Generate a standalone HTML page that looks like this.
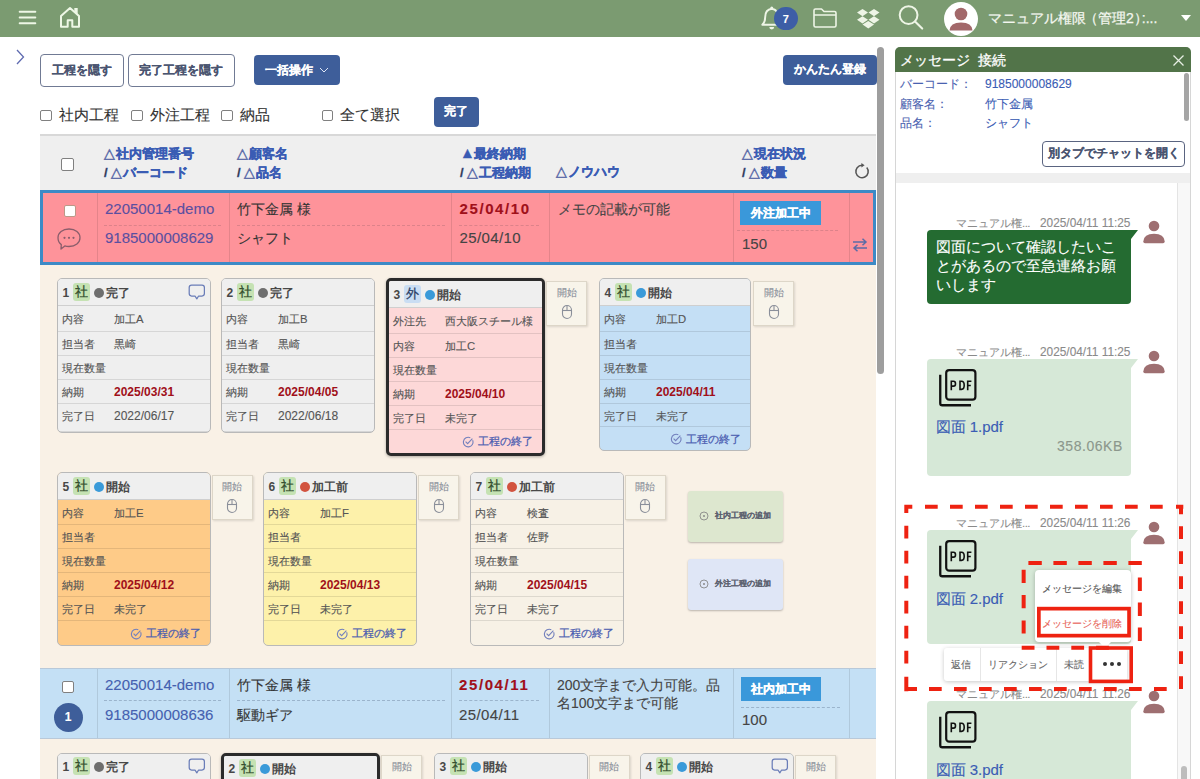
<!DOCTYPE html><html><head><meta charset="utf-8"><style>
*{box-sizing:border-box;margin:0;padding:0}
html,body{width:1200px;height:779px;overflow:hidden;background:#fff;font-family:"Liberation Sans",sans-serif;color:#333;-webkit-text-stroke-width:0.12px}
.a{position:absolute}
.t{position:absolute;white-space:nowrap}
.btnw{position:absolute;border:1.3px solid #707a94;border-radius:4px;background:#fff;color:#4a5470;font-size:12px;font-weight:bold;display:flex;align-items:center;justify-content:center}
.btnb{position:absolute;border-radius:4px;background:#3e5e9a;color:#fff;font-size:12px;font-weight:bold;display:flex;align-items:center;justify-content:center}
.cb{position:absolute;width:12px;height:12px;border:1px solid #808080;border-radius:2px;background:#fff}
.hd{position:absolute;font-size:13px;font-weight:bold;color:#3a5cb4;line-height:18px;white-space:nowrap;-webkit-text-stroke:0.35px #3a5cb4}
.hd b{color:#333}
.hd i{font-style:normal;font-weight:normal;-webkit-text-stroke:0.5px #5a6aa8;color:#5a6aa8;font-size:14px;margin-right:1px}
.card{position:absolute;border:1px solid #b9b9b9;border-radius:5px;overflow:hidden;font-size:12px;color:#555;background:#efefef}
.card.th{border:3px solid #2b2b2b;box-shadow:0 1px 3px rgba(0,0,0,.3)}
.ch{position:absolute;left:0;right:0;top:0;background:#efefef;border-bottom:1px solid #cfcfcf}
.cr{position:absolute;left:0;right:0;border-bottom:1px solid rgba(0,0,0,.1)}
.cr span{position:absolute;line-height:16px;white-space:nowrap;font-size:11.3px}
.red{color:#a0101a;font-weight:bold;-webkit-text-stroke-width:0}
.bdg{position:absolute;border-radius:3px;font-weight:bold;font-size:13px;text-align:center}
.dot{position:absolute;width:10px;height:10px;border-radius:50%}
.st{position:absolute;font-weight:bold;font-size:13px;color:#484848;white-space:nowrap;-webkit-text-stroke-width:0}
.kai{position:absolute;background:#f8f4ea;border:1px solid #ddd6c8;box-shadow:1px 1px 2px rgba(0,0,0,.12);font-size:9px;color:#8a8f9a;text-align:center}
.end{position:absolute;right:9px;color:#4a5cb0;font-size:11px;white-space:nowrap;-webkit-text-stroke-width:0.25px}
</style></head><body>
<div class="a" style="left:0;top:0;width:1200px;height:37px;background:#7b9b71"></div>
<svg class="a" style="left:17px;top:9px" width="22" height="18" viewBox="0 0 22 18"><g stroke="#eef7e6" stroke-width="2" stroke-linecap="round"><line x1="2.7" y1="2.7" x2="18.3" y2="2.7"/><line x1="2.7" y1="8.5" x2="18.3" y2="8.5"/><line x1="2.7" y1="14.3" x2="18.3" y2="14.3"/></g></svg>
<svg class="a" style="left:58px;top:5px" width="24" height="24" viewBox="0 0 24 24"><path d="M3 11 L12 3 L21 11 V21.7 H14.3 V15.3 H9.7 V21.7 H3 Z" fill="none" stroke="#eef7e6" stroke-width="2" stroke-linejoin="round"/><path d="M16.3 3 H19.7 V9.3 L16.3 6.2 Z" fill="#eef7e6"/></svg>
<svg class="a" style="left:758px;top:5px" width="24" height="28" viewBox="0 0 24 28"><path d="M4.3 19.8 Q7.2 17 7.2 12 Q7.2 4.8 13.75 3.8 Q20.3 4.8 20.3 12 Q20.3 17 23.2 19.8 Z" fill="none" stroke="#eef5e6" stroke-width="1.9" stroke-linejoin="round"/><circle cx="13.75" cy="3" r="1.5" fill="#eef5e6"/><path d="M11.3 22 A2.45 2.45 0 0 0 16.2 22 Z" fill="#eef5e6"/></svg>
<div class="a" style="left:774px;top:6.5px;width:23.5px;height:23.5px;border-radius:50%;background:#3d5ea6;color:#fff;font-size:11px;font-weight:bold;text-align:center;line-height:24px">7</div>
<svg class="a" style="left:811px;top:6px" width="28" height="24" viewBox="0 0 28 24"><path d="M3 4.5 Q3 3 4.5 3 H10.5 L13 5.5 H23.5 Q25 5.5 25 7 V19.5 Q25 21 23.5 21 H4.5 Q3 21 3 19.5 Z M3 9 H25" fill="none" stroke="#eef5e6" stroke-width="1.6" stroke-linejoin="round"/></svg>
<svg class="a" style="left:856px;top:7.6px" width="25" height="22" viewBox="0 0 25 22"><g fill="#eef5e6"><path d="M6.5 1 L1 4.6 L6.5 8.2 L12 4.6 Z"/><path d="M18 1 L12.5 4.6 L18 8.2 L23.5 4.6 Z"/><path d="M1 11.8 L6.5 15.4 L12 11.8 L6.5 8.2 Z"/><path d="M12.5 11.8 L18 15.4 L23.5 11.8 L18 8.2 Z"/><path d="M6.5 16.6 L12.25 20.6 L18 16.6 L12.25 13 Z"/></g></svg>
<svg class="a" style="left:896px;top:4px" width="30" height="28" viewBox="0 0 30 28"><circle cx="12.6" cy="11.1" r="8.9" fill="none" stroke="#eef5e6" stroke-width="2"/><line x1="19" y1="17.6" x2="26.2" y2="24.6" stroke="#eef5e6" stroke-width="2.1" stroke-linecap="round"/></svg>
<svg class="a" style="left:944px;top:2px" width="34" height="34" viewBox="0 0 34 34"><circle cx="17" cy="17" r="17" fill="#fff"/><circle cx="17" cy="12" r="6.3" fill="#a2686a"/><path d="M5.5 28.5 Q6 20.5 17 20.5 Q28 20.5 28.5 28.5 Z" fill="#a2686a"/></svg>
<div class="t" style="left:988px;top:10px;font-size:14px;color:#f4f7f0;line-height:17px;-webkit-text-stroke:0.25px #f4f7f0">マニュアル権限<span style="margin-left:-2px">（</span>管理2<span style="letter-spacing:-6px">）</span>:...</div>
<svg class="a" style="left:1180px;top:14px" width="12" height="8" viewBox="0 0 12 8"><path d="M1 1 H11 L6 7 Z" fill="#fff"/></svg>
<svg class="a" style="left:14px;top:48px" width="12" height="18" viewBox="0 0 12 18"><path d="M3 2 L9.5 9 L3 16" fill="none" stroke="#5f6bb0" stroke-width="1.3"/></svg>
<div class="btnw" style="left:39.5px;top:54px;width:84px;height:33px">工程を隠す</div>
<div class="btnw" style="left:127.5px;top:54px;width:107px;height:33px">完了工程を隠す</div>
<div class="btnb" style="left:254px;top:55px;width:86px;height:30px">一括操作 <svg style="margin-left:6px" width="10" height="6" viewBox="0 0 10 6"><path d="M1 1 L5 5 L9 1" fill="none" stroke="#dfe6f5" stroke-width="1"/></svg></div>
<div class="btnb" style="left:782.5px;top:54.5px;width:94px;height:30px">かんたん登録</div>
<div class="cb" style="left:40px;top:109.5px;width:11.5px;height:11.5px"></div>
<div class="t" style="left:58.5px;top:105.5px;font-size:15px;line-height:18px;color:#333">社内工程</div>
<div class="cb" style="left:131px;top:109.5px;width:11.5px;height:11.5px"></div>
<div class="t" style="left:149.5px;top:105.5px;font-size:15px;line-height:18px;color:#333">外注工程</div>
<div class="cb" style="left:221px;top:109.5px;width:11.5px;height:11.5px"></div>
<div class="t" style="left:239.5px;top:105.5px;font-size:15px;line-height:18px;color:#333">納品</div>
<div class="cb" style="left:321.5px;top:109.5px;width:11.5px;height:11.5px"></div>
<div class="t" style="left:340.0px;top:105.5px;font-size:15px;line-height:18px;color:#333">全て選択</div>
<div class="btnb" style="left:433.5px;top:96.5px;width:45px;height:30px">完了</div>
<div class="a" style="left:877px;top:46.5px;width:7px;height:327px;border-radius:4px;background:#9e9e9e"></div>
<div class="a" style="left:40px;top:134px;width:836px;height:56px;background:#efefef;border-top:2px solid #d8d8d8"></div>
<div class="cb" style="left:61px;top:158px;width:13px;height:13px"></div>
<div class="hd" style="left:104px;top:144.3px"><i>△</i>社内管理番号<br><b>/</b> <i>△</i>バーコード</div>
<div class="hd" style="left:237px;top:144.3px"><i>△</i>顧客名<br><b>/</b> <i>△</i>品名</div>
<div class="hd" style="left:460px;top:144.3px"><span style="font-size:15px;margin-right:-1px">▲</span>最終納期<br><b>/</b> <i>△</i>工程納期</div>
<div class="hd" style="left:556px;top:162.3px"><i>△</i>ノウハウ</div>
<div class="hd" style="left:742px;top:144.3px"><i>△</i>現在状況<br><b>/</b> <i>△</i>数量</div>
<svg class="a" style="left:853px;top:162px" width="18" height="18" viewBox="0 0 18 18"><path d="M13.75 5.5 A6.2 6.2 0 1 1 9 3.3" fill="none" stroke="#555" stroke-width="1.5"/><path d="M11.6 3.3 L8.4 1 V5.6 Z" fill="#555"/></svg>
<div class="a" style="left:40px;top:265px;width:836px;height:514px;background:#f9f1e6"></div>
<div class="a" style="left:40px;top:190px;width:836px;height:75px;background:#fe939a;border:3px solid #3d8ac6"></div><div class="a" style="left:96.5px;top:193px;width:1px;height:69px;background:rgba(0,0,0,.10)"></div><div class="a" style="left:228.7px;top:193px;width:1px;height:69px;background:rgba(0,0,0,.10)"></div><div class="a" style="left:451.2px;top:193px;width:1px;height:69px;background:rgba(0,0,0,.10)"></div><div class="a" style="left:549.2px;top:193px;width:1px;height:69px;background:rgba(0,0,0,.10)"></div><div class="a" style="left:732.6px;top:193px;width:1px;height:69px;background:rgba(0,0,0,.10)"></div><div class="a" style="left:848.8px;top:193px;width:1px;height:69px;background:rgba(0,0,0,.10)"></div>
<div class="cb" style="left:63.5px;top:204.5px;width:12px;height:12px;border-color:#b98;"></div>
<svg class="a" style="left:56px;top:227px" width="26" height="24" viewBox="0 0 26 24"><path d="M13 2 C19.5 2 24 5.8 24 10.8 C24 15.8 19.5 19.5 13 19.5 C11.5 19.5 10 19.3 8.8 18.9 L5 22 L5.3 17.6 C3 16 2 13.5 2 10.8 C2 5.8 6.5 2 13 2 Z" fill="none" stroke="#8b5d6b" stroke-width="1.3" stroke-linejoin="round"/><circle cx="8.5" cy="10.8" r="1.1" fill="#8b5d6b"/><circle cx="13" cy="10.8" r="1.1" fill="#8b5d6b"/><circle cx="17.5" cy="10.8" r="1.1" fill="#8b5d6b"/></svg>
<div class="t" style="left:105px;top:200px;font-size:15px;line-height:18px;color:#5b4fa0">22050014-demo</div>
<div class="t" style="left:105px;top:229px;font-size:15px;line-height:18px;color:#5b4fa0">9185000008629</div>
<div class="t" style="left:237px;top:200px;font-size:14px;line-height:18px;color:#333">竹下金属 様</div>
<div class="t" style="left:237px;top:229px;font-size:14px;line-height:18px;color:#333">シャフト</div>
<div class="t" style="left:459.5px;top:200px;font-size:15px;line-height:18px;color:#a0101a;font-weight:bold;letter-spacing:1.6px">25/04/10</div>
<div class="t" style="left:459.5px;top:229px;font-size:15px;line-height:18px;color:#444;letter-spacing:0.4px">25/04/10</div>
<div class="t" style="left:558px;top:200px;font-size:14px;line-height:18px;color:#444">メモの記載が可能</div>
<div class="a" style="left:740px;top:200.5px;width:81px;height:24.5px;background:#3a98da;color:#fff;font-weight:bold;font-size:12px;text-align:center;line-height:24px;-webkit-text-stroke:0.3px #fff">外注加工中</div>
<div class="t" style="left:742px;top:235px;font-size:15px;line-height:18px;color:#444">150</div>
<div class="a" style="left:104px;top:224.5px;width:117px;height:0;border-top:1px dashed rgba(120,80,90,.25)"></div>
<div class="a" style="left:237px;top:224.5px;width:208px;height:0;border-top:1px dashed rgba(120,80,90,.25)"></div>
<div class="a" style="left:459px;top:224.5px;width:80px;height:0;border-top:1px dashed rgba(120,80,90,.25)"></div>
<div class="a" style="left:737px;top:229.5px;width:101px;height:0;border-top:1px dashed rgba(120,80,90,.25)"></div>
<svg class="a" style="left:851px;top:237px" width="18" height="16" viewBox="0 0 18 16"><g fill="none" stroke="#5c6ca6" stroke-width="1.5"><path d="M2 5 H15 M11.5 1.8 L15 5 L11.5 8.2"/><path d="M16 11 H3 M6.5 7.8 L3 11 L6.5 14.2"/></g></svg>
<div class="a" style="left:40px;top:667.5px;width:836px;height:71.5px;background:#c4e0f5;border-top:1px solid #b9c9d9;border-bottom:1px solid #b9c9d9"></div><div class="a" style="left:96.5px;top:668.5px;width:1px;height:69.5px;background:rgba(0,0,0,.10)"></div><div class="a" style="left:228.7px;top:668.5px;width:1px;height:69.5px;background:rgba(0,0,0,.10)"></div><div class="a" style="left:451.2px;top:668.5px;width:1px;height:69.5px;background:rgba(0,0,0,.10)"></div><div class="a" style="left:549.2px;top:668.5px;width:1px;height:69.5px;background:rgba(0,0,0,.10)"></div><div class="a" style="left:732.6px;top:668.5px;width:1px;height:69.5px;background:rgba(0,0,0,.10)"></div><div class="a" style="left:848.8px;top:668.5px;width:1px;height:69.5px;background:rgba(0,0,0,.10)"></div>
<div class="cb" style="left:62px;top:681px;width:12px;height:12px"></div>
<div class="a" style="left:53.5px;top:702.5px;width:29px;height:29px;border-radius:50%;background:#3e5e9a;color:#fff;font-size:12px;font-weight:bold;text-align:center;line-height:29px">1</div>
<div class="t" style="left:105px;top:676px;font-size:15px;line-height:18px;color:#4560b0">22050014-demo</div>
<div class="t" style="left:105px;top:705.5px;font-size:15px;line-height:18px;color:#4560b0">9185000008636</div>
<div class="t" style="left:237px;top:676px;font-size:14px;line-height:18px;color:#333">竹下金属 様</div>
<div class="t" style="left:237px;top:705.5px;font-size:14px;line-height:18px;color:#333">駆動ギア</div>
<div class="t" style="left:459px;top:676px;font-size:15px;line-height:18px;color:#a0101a;font-weight:bold;letter-spacing:1.6px">25/04/11</div>
<div class="t" style="left:459px;top:705.5px;font-size:15px;line-height:18px;color:#444;letter-spacing:0.4px">25/04/11</div>
<div class="a" style="left:557px;top:676px;width:175px;font-size:14px;line-height:18px;color:#444">200文字まで入力可能。品名100文字まで可能</div>
<div class="a" style="left:741px;top:676.5px;width:80px;height:24.5px;background:#3a98da;color:#fff;font-weight:bold;font-size:12px;text-align:center;line-height:24px;-webkit-text-stroke:0.3px #fff">社内加工中</div>
<div class="t" style="left:742px;top:711px;font-size:15px;line-height:18px;color:#444">100</div>
<div class="a" style="left:104px;top:699.5px;width:117px;height:0;border-top:1px dashed rgba(60,80,110,.3)"></div>
<div class="a" style="left:237px;top:699.5px;width:208px;height:0;border-top:1px dashed rgba(60,80,110,.3)"></div>
<div class="a" style="left:459px;top:699.5px;width:80px;height:0;border-top:1px dashed rgba(60,80,110,.3)"></div>
<div class="a" style="left:741px;top:706.5px;width:99px;height:0;border-top:1px dashed rgba(60,80,110,.3)"></div>
<div class="card" style="left:57px;top:278px;width:154px;height:155px;background:#efefef"><div class="ch" style="height:27px"><div class="st" style="left:4.5px;top:5.5px;font-size:12px;line-height:16px">1</div><div class="bdg" style="left:14.5px;top:3.5px;width:17.5px;height:18px;line-height:18px;background:#c5e2b3;color:#2f4a2a;font-weight:normal;-webkit-text-stroke:0.3px #2f4a2a">社</div><div class="dot" style="left:35.5px;top:8.5px;background:#6e6e6e"></div><div class="st" style="left:48px;top:4.5px;line-height:18px;font-size:12px">完了</div><svg class="a" style="left:129.5px;top:4.5px" width="18" height="17" viewBox="0 0 18 17"><path d="M3.6 1.2 H14 Q16.4 1.2 16.4 3.6 V9.6 Q16.4 12 14 12 H10.6 L8.8 14.8 L7 12 H3.6 Q1.2 12 1.2 9.6 V3.6 Q1.2 1.2 3.6 1.2 Z" fill="none" stroke="#6a7db8" stroke-width="1.25" stroke-linejoin="round"/></svg></div><div class="cr" style="top:27px;height:26px"><span style="left:4px;top:5px">内容</span><span style="left:56px;top:5px;font-size:11.3px">加工A</span></div><div class="cr" style="top:53px;height:24px"><span style="left:4px;top:4px">担当者</span><span style="left:56px;top:4px;font-size:11.3px">黒崎</span></div><div class="cr" style="top:77px;height:24px"><span style="left:4px;top:4px">現在数量</span><span style="left:56px;top:4px;font-size:11.3px"></span></div><div class="cr" style="top:101px;height:24px"><span style="left:4px;top:4px">納期</span><span class="red" style="left:56px;top:4px;font-size:12px">2025/03/31</span></div><div class="cr" style="top:125px;height:28px"><span style="left:4px;top:4px">完了日</span><span style="left:56px;top:4px;font-size:12px">2022/06/17</span></div></div>
<div class="card" style="left:221px;top:278px;width:154px;height:155px;background:#efefef"><div class="ch" style="height:27px"><div class="st" style="left:4.5px;top:5.5px;font-size:12px;line-height:16px">2</div><div class="bdg" style="left:14.5px;top:3.5px;width:17.5px;height:18px;line-height:18px;background:#c5e2b3;color:#2f4a2a;font-weight:normal;-webkit-text-stroke:0.3px #2f4a2a">社</div><div class="dot" style="left:35.5px;top:8.5px;background:#6e6e6e"></div><div class="st" style="left:48px;top:4.5px;line-height:18px;font-size:12px">完了</div></div><div class="cr" style="top:27px;height:26px"><span style="left:4px;top:5px">内容</span><span style="left:56px;top:5px;font-size:11.3px">加工B</span></div><div class="cr" style="top:53px;height:24px"><span style="left:4px;top:4px">担当者</span><span style="left:56px;top:4px;font-size:11.3px">黒崎</span></div><div class="cr" style="top:77px;height:24px"><span style="left:4px;top:4px">現在数量</span><span style="left:56px;top:4px;font-size:11.3px"></span></div><div class="cr" style="top:101px;height:24px"><span style="left:4px;top:4px">納期</span><span class="red" style="left:56px;top:4px;font-size:12px">2025/04/05</span></div><div class="cr" style="top:125px;height:28px"><span style="left:4px;top:4px">完了日</span><span style="left:56px;top:4px;font-size:12px">2022/06/18</span></div></div>
<div class="card th" style="left:386px;top:278px;width:159px;height:178.0px;background:#fdd8d8"><div class="ch" style="height:27px"><div class="st" style="left:4.5px;top:5.5px;font-size:12px;line-height:16px">3</div><div class="bdg" style="left:14.5px;top:3.5px;width:17.5px;height:18px;line-height:18px;background:#c9ddf3;color:#2a3f66;font-weight:normal;-webkit-text-stroke:0.3px #2a3f66">外</div><div class="dot" style="left:35.5px;top:8.5px;background:#3a9ad9"></div><div class="st" style="left:48px;top:4.5px;line-height:18px;font-size:12px">開始</div></div><div class="cr" style="top:27px;height:25.5px"><span style="left:4px;top:5px">外注先</span><span style="left:56px;top:5px;font-size:11.3px">西大阪スチール様</span></div><div class="cr" style="top:52.5px;height:24.5px"><span style="left:4px;top:4px">内容</span><span style="left:56px;top:4px;font-size:11.3px">加工C</span></div><div class="cr" style="top:77.0px;height:24px"><span style="left:4px;top:4px">現在数量</span><span style="left:56px;top:4px;font-size:11.3px"></span></div><div class="cr" style="top:101.0px;height:24px"><span style="left:4px;top:4px">納期</span><span class="red" style="left:56px;top:4px;font-size:12px">2025/04/10</span></div><div class="cr" style="top:125.0px;height:23.5px"><span style="left:4px;top:4px">完了日</span><span style="left:56px;top:4px;font-size:11.3px">未完了</span></div><div class="a" style="left:0;right:0;top:148.5px;height:23.5px"><svg class="a" style="left:73px;top:6.25px" width="12" height="12" viewBox="0 0 12 12"><path d="M10.6 4.2 A4.8 4.8 0 1 1 8.3 1.8" fill="none" stroke="#7380bd" stroke-width="1.1"/><path d="M3.6 5.6 L5.6 7.6 L10.4 2.6" fill="none" stroke="#7380bd" stroke-width="1.1"/></svg><span class="end" style="top:3.75px;line-height:16px">工程の終了</span></div></div>
<div class="kai" style="left:546px;top:281px;width:41px;height:44.5px"><div style="margin-top:5px;line-height:11px;font-size:10px">開始</div></div><svg class="a" style="left:560.5px;top:304px" width="12" height="16" viewBox="0 0 12 16"><rect x="1.5" y="1.5" width="9" height="13" rx="4.5" fill="none" stroke="#8a8f9a" stroke-width="1.1"/><line x1="6" y1="2" x2="6" y2="6.5" stroke="#8a8f9a" stroke-width="1.1"/><line x1="1.8" y1="6.5" x2="10.2" y2="6.5" stroke="#8a8f9a" stroke-width="1.1"/></svg>
<div class="card" style="left:599px;top:278px;width:152px;height:173.0px;background:#c4dff5"><div class="ch" style="height:27px"><div class="st" style="left:4.5px;top:5.5px;font-size:12px;line-height:16px">4</div><div class="bdg" style="left:14.5px;top:3.5px;width:17.5px;height:18px;line-height:18px;background:#c5e2b3;color:#2f4a2a;font-weight:normal;-webkit-text-stroke:0.3px #2f4a2a">社</div><div class="dot" style="left:35.5px;top:8.5px;background:#3a9ad9"></div><div class="st" style="left:48px;top:4.5px;line-height:18px;font-size:12px">開始</div></div><div class="cr" style="top:27px;height:26px"><span style="left:4px;top:5px">内容</span><span style="left:56px;top:5px;font-size:11.3px">加工D</span></div><div class="cr" style="top:53px;height:24px"><span style="left:4px;top:4px">担当者</span><span style="left:56px;top:4px;font-size:11.3px"></span></div><div class="cr" style="top:77px;height:24px"><span style="left:4px;top:4px">現在数量</span><span style="left:56px;top:4px;font-size:11.3px"></span></div><div class="cr" style="top:101px;height:23.5px"><span style="left:4px;top:4px">納期</span><span class="red" style="left:56px;top:4px;font-size:12px">2025/04/11</span></div><div class="cr" style="top:124.5px;height:23.5px"><span style="left:4px;top:4px">完了日</span><span style="left:56px;top:4px;font-size:11.3px">未完了</span></div><div class="a" style="left:0;right:0;top:148.0px;height:23px"><svg class="a" style="left:70px;top:6.0px" width="12" height="12" viewBox="0 0 12 12"><path d="M10.6 4.2 A4.8 4.8 0 1 1 8.3 1.8" fill="none" stroke="#7380bd" stroke-width="1.1"/><path d="M3.6 5.6 L5.6 7.6 L10.4 2.6" fill="none" stroke="#7380bd" stroke-width="1.1"/></svg><span class="end" style="top:3.5px;line-height:16px">工程の終了</span></div></div>
<div class="kai" style="left:753px;top:281px;width:41px;height:44.5px"><div style="margin-top:5px;line-height:11px;font-size:10px">開始</div></div><svg class="a" style="left:767.5px;top:304px" width="12" height="16" viewBox="0 0 12 16"><rect x="1.5" y="1.5" width="9" height="13" rx="4.5" fill="none" stroke="#8a8f9a" stroke-width="1.1"/><line x1="6" y1="2" x2="6" y2="6.5" stroke="#8a8f9a" stroke-width="1.1"/><line x1="1.8" y1="6.5" x2="10.2" y2="6.5" stroke="#8a8f9a" stroke-width="1.1"/></svg>
<div class="card" style="left:57px;top:472px;width:154px;height:174px;background:#fecb88"><div class="ch" style="height:27px"><div class="st" style="left:4.5px;top:5.5px;font-size:12px;line-height:16px">5</div><div class="bdg" style="left:14.5px;top:3.5px;width:17.5px;height:18px;line-height:18px;background:#c5e2b3;color:#2f4a2a;font-weight:normal;-webkit-text-stroke:0.3px #2f4a2a">社</div><div class="dot" style="left:35.5px;top:8.5px;background:#3a9ad9"></div><div class="st" style="left:48px;top:4.5px;line-height:18px;font-size:12px">開始</div></div><div class="cr" style="top:27px;height:25px"><span style="left:4px;top:5px">内容</span><span style="left:56px;top:5px;font-size:11.3px">加工E</span></div><div class="cr" style="top:52px;height:24px"><span style="left:4px;top:4px">担当者</span><span style="left:56px;top:4px;font-size:11.3px"></span></div><div class="cr" style="top:76px;height:24px"><span style="left:4px;top:4px">現在数量</span><span style="left:56px;top:4px;font-size:11.3px"></span></div><div class="cr" style="top:100px;height:24px"><span style="left:4px;top:4px">納期</span><span class="red" style="left:56px;top:4px;font-size:12px">2025/04/12</span></div><div class="cr" style="top:124px;height:24px"><span style="left:4px;top:4px">完了日</span><span style="left:56px;top:4px;font-size:11.3px">未完了</span></div><div class="a" style="left:0;right:0;top:148px;height:24px"><svg class="a" style="left:72px;top:6.5px" width="12" height="12" viewBox="0 0 12 12"><path d="M10.6 4.2 A4.8 4.8 0 1 1 8.3 1.8" fill="none" stroke="#7380bd" stroke-width="1.1"/><path d="M3.6 5.6 L5.6 7.6 L10.4 2.6" fill="none" stroke="#7380bd" stroke-width="1.1"/></svg><span class="end" style="top:4.0px;line-height:16px">工程の終了</span></div></div>
<div class="kai" style="left:211.5px;top:475px;width:41px;height:44.5px"><div style="margin-top:5px;line-height:11px;font-size:10px">開始</div></div><svg class="a" style="left:226.0px;top:498px" width="12" height="16" viewBox="0 0 12 16"><rect x="1.5" y="1.5" width="9" height="13" rx="4.5" fill="none" stroke="#8a8f9a" stroke-width="1.1"/><line x1="6" y1="2" x2="6" y2="6.5" stroke="#8a8f9a" stroke-width="1.1"/><line x1="1.8" y1="6.5" x2="10.2" y2="6.5" stroke="#8a8f9a" stroke-width="1.1"/></svg>
<div class="card" style="left:263px;top:472px;width:154px;height:174px;background:#fdf1aa"><div class="ch" style="height:27px"><div class="st" style="left:4.5px;top:5.5px;font-size:12px;line-height:16px">6</div><div class="bdg" style="left:14.5px;top:3.5px;width:17.5px;height:18px;line-height:18px;background:#c5e2b3;color:#2f4a2a;font-weight:normal;-webkit-text-stroke:0.3px #2f4a2a">社</div><div class="dot" style="left:35.5px;top:8.5px;background:#d2533f"></div><div class="st" style="left:48px;top:4.5px;line-height:18px;font-size:12px">加工前</div></div><div class="cr" style="top:27px;height:25px"><span style="left:4px;top:5px">内容</span><span style="left:56px;top:5px;font-size:11.3px">加工F</span></div><div class="cr" style="top:52px;height:24px"><span style="left:4px;top:4px">担当者</span><span style="left:56px;top:4px;font-size:11.3px"></span></div><div class="cr" style="top:76px;height:24px"><span style="left:4px;top:4px">現在数量</span><span style="left:56px;top:4px;font-size:11.3px"></span></div><div class="cr" style="top:100px;height:24px"><span style="left:4px;top:4px">納期</span><span class="red" style="left:56px;top:4px;font-size:12px">2025/04/13</span></div><div class="cr" style="top:124px;height:24px"><span style="left:4px;top:4px">完了日</span><span style="left:56px;top:4px;font-size:11.3px">未完了</span></div><div class="a" style="left:0;right:0;top:148px;height:24px"><svg class="a" style="left:72px;top:6.5px" width="12" height="12" viewBox="0 0 12 12"><path d="M10.6 4.2 A4.8 4.8 0 1 1 8.3 1.8" fill="none" stroke="#7380bd" stroke-width="1.1"/><path d="M3.6 5.6 L5.6 7.6 L10.4 2.6" fill="none" stroke="#7380bd" stroke-width="1.1"/></svg><span class="end" style="top:4.0px;line-height:16px">工程の終了</span></div></div>
<div class="kai" style="left:418px;top:475px;width:41px;height:44.5px"><div style="margin-top:5px;line-height:11px;font-size:10px">開始</div></div><svg class="a" style="left:432.5px;top:498px" width="12" height="16" viewBox="0 0 12 16"><rect x="1.5" y="1.5" width="9" height="13" rx="4.5" fill="none" stroke="#8a8f9a" stroke-width="1.1"/><line x1="6" y1="2" x2="6" y2="6.5" stroke="#8a8f9a" stroke-width="1.1"/><line x1="1.8" y1="6.5" x2="10.2" y2="6.5" stroke="#8a8f9a" stroke-width="1.1"/></svg>
<div class="card" style="left:470px;top:472px;width:154px;height:174px;background:#f7f1e6"><div class="ch" style="height:27px"><div class="st" style="left:4.5px;top:5.5px;font-size:12px;line-height:16px">7</div><div class="bdg" style="left:14.5px;top:3.5px;width:17.5px;height:18px;line-height:18px;background:#c5e2b3;color:#2f4a2a;font-weight:normal;-webkit-text-stroke:0.3px #2f4a2a">社</div><div class="dot" style="left:35.5px;top:8.5px;background:#d2533f"></div><div class="st" style="left:48px;top:4.5px;line-height:18px;font-size:12px">加工前</div></div><div class="cr" style="top:27px;height:25px"><span style="left:4px;top:5px">内容</span><span style="left:56px;top:5px;font-size:11.3px">検査</span></div><div class="cr" style="top:52px;height:24px"><span style="left:4px;top:4px">担当者</span><span style="left:56px;top:4px;font-size:11.3px">佐野</span></div><div class="cr" style="top:76px;height:24px"><span style="left:4px;top:4px">現在数量</span><span style="left:56px;top:4px;font-size:11.3px"></span></div><div class="cr" style="top:100px;height:24px"><span style="left:4px;top:4px">納期</span><span class="red" style="left:56px;top:4px;font-size:12px">2025/04/15</span></div><div class="cr" style="top:124px;height:24px"><span style="left:4px;top:4px">完了日</span><span style="left:56px;top:4px;font-size:11.3px">未完了</span></div><div class="a" style="left:0;right:0;top:148px;height:24px"><svg class="a" style="left:72px;top:6.5px" width="12" height="12" viewBox="0 0 12 12"><path d="M10.6 4.2 A4.8 4.8 0 1 1 8.3 1.8" fill="none" stroke="#7380bd" stroke-width="1.1"/><path d="M3.6 5.6 L5.6 7.6 L10.4 2.6" fill="none" stroke="#7380bd" stroke-width="1.1"/></svg><span class="end" style="top:4.0px;line-height:16px">工程の終了</span></div></div>
<div class="kai" style="left:624.5px;top:475px;width:41px;height:44.5px"><div style="margin-top:5px;line-height:11px;font-size:10px">開始</div></div><svg class="a" style="left:639.0px;top:498px" width="12" height="16" viewBox="0 0 12 16"><rect x="1.5" y="1.5" width="9" height="13" rx="4.5" fill="none" stroke="#8a8f9a" stroke-width="1.1"/><line x1="6" y1="2" x2="6" y2="6.5" stroke="#8a8f9a" stroke-width="1.1"/><line x1="1.8" y1="6.5" x2="10.2" y2="6.5" stroke="#8a8f9a" stroke-width="1.1"/></svg>
<div class="a" style="left:688px;top:490.5px;width:95px;height:51px;background:#dde7cf;border-radius:3px;box-shadow:0 1px 2px rgba(0,0,0,.25)"></div><svg class="a" style="left:699px;top:510.5px" width="10" height="10" viewBox="0 0 10 10"><circle cx="5" cy="5" r="4" fill="none" stroke="#888" stroke-width=".9"/><circle cx="5" cy="5" r="1" fill="#888"/></svg><div class="t" style="left:714.5px;top:510.0px;font-size:8px;line-height:12px;color:#5d6270;font-weight:bold">社内工程の追加</div>
<div class="a" style="left:688px;top:558.5px;width:95px;height:51px;background:#dfe6f6;border-radius:3px;box-shadow:0 1px 2px rgba(0,0,0,.25)"></div><svg class="a" style="left:699px;top:578.5px" width="10" height="10" viewBox="0 0 10 10"><circle cx="5" cy="5" r="4" fill="none" stroke="#888" stroke-width=".9"/><circle cx="5" cy="5" r="1" fill="#888"/></svg><div class="t" style="left:714.5px;top:578.0px;font-size:8px;line-height:12px;color:#5d6270;font-weight:bold">外注工程の追加</div>
<div class="card" style="left:57px;top:752.5px;width:154px;height:155px;background:#efefef"><div class="ch" style="height:27px"><div class="st" style="left:4.5px;top:5.5px;font-size:12px;line-height:16px">1</div><div class="bdg" style="left:14.5px;top:3.5px;width:17.5px;height:18px;line-height:18px;background:#c5e2b3;color:#2f4a2a;font-weight:normal;-webkit-text-stroke:0.3px #2f4a2a">社</div><div class="dot" style="left:35.5px;top:8.5px;background:#6e6e6e"></div><div class="st" style="left:48px;top:4.5px;line-height:18px;font-size:12px">完了</div><svg class="a" style="left:129.5px;top:4.5px" width="18" height="17" viewBox="0 0 18 17"><path d="M3.6 1.2 H14 Q16.4 1.2 16.4 3.6 V9.6 Q16.4 12 14 12 H10.6 L8.8 14.8 L7 12 H3.6 Q1.2 12 1.2 9.6 V3.6 Q1.2 1.2 3.6 1.2 Z" fill="none" stroke="#6a7db8" stroke-width="1.25" stroke-linejoin="round"/></svg></div><div class="cr" style="top:27px;height:26px"><span style="left:4px;top:5px">内容</span><span style="left:56px;top:5px;font-size:11.3px">加工A</span></div><div class="cr" style="top:53px;height:24px"><span style="left:4px;top:4px">担当者</span><span style="left:56px;top:4px;font-size:11.3px">黒崎</span></div><div class="cr" style="top:77px;height:24px"><span style="left:4px;top:4px">現在数量</span><span style="left:56px;top:4px;font-size:11.3px"></span></div><div class="cr" style="top:101px;height:24px"><span style="left:4px;top:4px">納期</span><span class="red" style="left:56px;top:4px;font-size:12px">2025/03/31</span></div><div class="cr" style="top:125px;height:28px"><span style="left:4px;top:4px">完了日</span><span style="left:56px;top:4px;font-size:12px">2022/06/17</span></div></div>
<div class="card th" style="left:221px;top:752.5px;width:159px;height:179px;background:#c4dff5"><div class="ch" style="height:27px"><div class="st" style="left:4.5px;top:5.5px;font-size:12px;line-height:16px">2</div><div class="bdg" style="left:14.5px;top:3.5px;width:17.5px;height:18px;line-height:18px;background:#c5e2b3;color:#2f4a2a;font-weight:normal;-webkit-text-stroke:0.3px #2f4a2a">社</div><div class="dot" style="left:35.5px;top:8.5px;background:#3a9ad9"></div><div class="st" style="left:48px;top:4.5px;line-height:18px;font-size:12px">開始</div></div><div class="cr" style="top:27px;height:25px"><span style="left:4px;top:5px">内容</span><span style="left:56px;top:5px;font-size:11.3px">加工B</span></div><div class="cr" style="top:52px;height:24px"><span style="left:4px;top:4px">担当者</span><span style="left:56px;top:4px;font-size:11.3px"></span></div><div class="cr" style="top:76px;height:24px"><span style="left:4px;top:4px">現在数量</span><span style="left:56px;top:4px;font-size:11.3px"></span></div><div class="cr" style="top:100px;height:24px"><span style="left:4px;top:4px">納期</span><span class="red" style="left:56px;top:4px;font-size:12px">2025/04/05</span></div><div class="cr" style="top:124px;height:23px"><span style="left:4px;top:4px">完了日</span><span style="left:56px;top:4px;font-size:11.3px">未完了</span></div><div class="a" style="left:0;right:0;top:147px;height:26px"><svg class="a" style="left:73px;top:7.5px" width="12" height="12" viewBox="0 0 12 12"><path d="M10.6 4.2 A4.8 4.8 0 1 1 8.3 1.8" fill="none" stroke="#7380bd" stroke-width="1.1"/><path d="M3.6 5.6 L5.6 7.6 L10.4 2.6" fill="none" stroke="#7380bd" stroke-width="1.1"/></svg><span class="end" style="top:5.0px;line-height:16px">工程の終了</span></div></div>
<div class="kai" style="left:381px;top:755px;width:41px;height:44.5px"><div style="margin-top:5px;line-height:11px;font-size:10px">開始</div></div><svg class="a" style="left:395.5px;top:778px" width="12" height="16" viewBox="0 0 12 16"><rect x="1.5" y="1.5" width="9" height="13" rx="4.5" fill="none" stroke="#8a8f9a" stroke-width="1.1"/><line x1="6" y1="2" x2="6" y2="6.5" stroke="#8a8f9a" stroke-width="1.1"/><line x1="1.8" y1="6.5" x2="10.2" y2="6.5" stroke="#8a8f9a" stroke-width="1.1"/></svg>
<div class="card" style="left:434px;top:752.5px;width:154px;height:175px;background:#c4dff5"><div class="ch" style="height:27px"><div class="st" style="left:4.5px;top:5.5px;font-size:12px;line-height:16px">3</div><div class="bdg" style="left:14.5px;top:3.5px;width:17.5px;height:18px;line-height:18px;background:#c5e2b3;color:#2f4a2a;font-weight:normal;-webkit-text-stroke:0.3px #2f4a2a">社</div><div class="dot" style="left:35.5px;top:8.5px;background:#3a9ad9"></div><div class="st" style="left:48px;top:4.5px;line-height:18px;font-size:12px">開始</div></div><div class="cr" style="top:27px;height:26px"><span style="left:4px;top:5px">内容</span><span style="left:56px;top:5px;font-size:11.3px">加工C</span></div><div class="cr" style="top:53px;height:24px"><span style="left:4px;top:4px">担当者</span><span style="left:56px;top:4px;font-size:11.3px"></span></div><div class="cr" style="top:77px;height:24px"><span style="left:4px;top:4px">現在数量</span><span style="left:56px;top:4px;font-size:11.3px"></span></div><div class="cr" style="top:101px;height:24px"><span style="left:4px;top:4px">納期</span><span class="red" style="left:56px;top:4px;font-size:12px">2025/04/10</span></div><div class="cr" style="top:125px;height:24px"><span style="left:4px;top:4px">完了日</span><span style="left:56px;top:4px;font-size:11.3px">未完了</span></div><div class="a" style="left:0;right:0;top:149px;height:24px"><svg class="a" style="left:72px;top:6.5px" width="12" height="12" viewBox="0 0 12 12"><path d="M10.6 4.2 A4.8 4.8 0 1 1 8.3 1.8" fill="none" stroke="#7380bd" stroke-width="1.1"/><path d="M3.6 5.6 L5.6 7.6 L10.4 2.6" fill="none" stroke="#7380bd" stroke-width="1.1"/></svg><span class="end" style="top:4.0px;line-height:16px">工程の終了</span></div></div>
<div class="kai" style="left:588.5px;top:755px;width:41px;height:44.5px"><div style="margin-top:5px;line-height:11px;font-size:10px">開始</div></div><svg class="a" style="left:603.0px;top:778px" width="12" height="16" viewBox="0 0 12 16"><rect x="1.5" y="1.5" width="9" height="13" rx="4.5" fill="none" stroke="#8a8f9a" stroke-width="1.1"/><line x1="6" y1="2" x2="6" y2="6.5" stroke="#8a8f9a" stroke-width="1.1"/><line x1="1.8" y1="6.5" x2="10.2" y2="6.5" stroke="#8a8f9a" stroke-width="1.1"/></svg>
<div class="card" style="left:640px;top:752.5px;width:154px;height:175px;background:#c4dff5"><div class="ch" style="height:27px"><div class="st" style="left:4.5px;top:5.5px;font-size:12px;line-height:16px">4</div><div class="bdg" style="left:14.5px;top:3.5px;width:17.5px;height:18px;line-height:18px;background:#c5e2b3;color:#2f4a2a;font-weight:normal;-webkit-text-stroke:0.3px #2f4a2a">社</div><div class="dot" style="left:35.5px;top:8.5px;background:#3a9ad9"></div><div class="st" style="left:48px;top:4.5px;line-height:18px;font-size:12px">開始</div><svg class="a" style="left:129.5px;top:4.5px" width="18" height="17" viewBox="0 0 18 17"><path d="M3.6 1.2 H14 Q16.4 1.2 16.4 3.6 V9.6 Q16.4 12 14 12 H10.6 L8.8 14.8 L7 12 H3.6 Q1.2 12 1.2 9.6 V3.6 Q1.2 1.2 3.6 1.2 Z" fill="none" stroke="#6a7db8" stroke-width="1.25" stroke-linejoin="round"/></svg></div><div class="cr" style="top:27px;height:26px"><span style="left:4px;top:5px">内容</span><span style="left:56px;top:5px;font-size:11.3px">加工D</span></div><div class="cr" style="top:53px;height:24px"><span style="left:4px;top:4px">担当者</span><span style="left:56px;top:4px;font-size:11.3px"></span></div><div class="cr" style="top:77px;height:24px"><span style="left:4px;top:4px">現在数量</span><span style="left:56px;top:4px;font-size:11.3px"></span></div><div class="cr" style="top:101px;height:24px"><span style="left:4px;top:4px">納期</span><span class="red" style="left:56px;top:4px;font-size:12px">2025/04/11</span></div><div class="cr" style="top:125px;height:24px"><span style="left:4px;top:4px">完了日</span><span style="left:56px;top:4px;font-size:11.3px">未完了</span></div><div class="a" style="left:0;right:0;top:149px;height:24px"><svg class="a" style="left:72px;top:6.5px" width="12" height="12" viewBox="0 0 12 12"><path d="M10.6 4.2 A4.8 4.8 0 1 1 8.3 1.8" fill="none" stroke="#7380bd" stroke-width="1.1"/><path d="M3.6 5.6 L5.6 7.6 L10.4 2.6" fill="none" stroke="#7380bd" stroke-width="1.1"/></svg><span class="end" style="top:4.0px;line-height:16px">工程の終了</span></div></div>
<div class="kai" style="left:795px;top:755px;width:41px;height:44.5px"><div style="margin-top:5px;line-height:11px;font-size:10px">開始</div></div><svg class="a" style="left:809.5px;top:778px" width="12" height="16" viewBox="0 0 12 16"><rect x="1.5" y="1.5" width="9" height="13" rx="4.5" fill="none" stroke="#8a8f9a" stroke-width="1.1"/><line x1="6" y1="2" x2="6" y2="6.5" stroke="#8a8f9a" stroke-width="1.1"/><line x1="1.8" y1="6.5" x2="10.2" y2="6.5" stroke="#8a8f9a" stroke-width="1.1"/></svg>
<div class="a" style="left:894.5px;top:47px;width:296px;height:740px;background:#fff;border:1px solid #d6d6d6;border-radius:5px 5px 0 0"></div>
<div class="a" style="left:894.5px;top:47px;width:296px;height:25px;background:#527449;border-radius:5px 5px 0 0"></div>
<div class="t" style="left:900px;top:51px;font-size:14px;line-height:18px;color:#fff;-webkit-text-stroke:0.3px #fff">メッセージ&nbsp;&nbsp;接続</div>
<svg class="a" style="left:1172px;top:54px" width="13" height="13" viewBox="0 0 13 13"><path d="M1.5 1.5 L11.5 11.5 M11.5 1.5 L1.5 11.5" stroke="#e8efe4" stroke-width="1.3"/></svg>
<div class="t" style="left:900px;top:76.5px;font-size:12px;line-height:15px;color:#4a62b0">バーコード：</div>
<div class="t" style="left:985px;top:76.5px;font-size:12px;line-height:15px;color:#3a5cb4">9185000008629</div>
<div class="t" style="left:900px;top:96.5px;font-size:12px;line-height:15px;color:#4a62b0">顧客名：</div>
<div class="t" style="left:985px;top:96.5px;font-size:12px;line-height:15px;color:#3a5cb4">竹下金属</div>
<div class="t" style="left:900px;top:115.5px;font-size:12px;line-height:15px;color:#4a62b0">品名：</div>
<div class="t" style="left:985px;top:115.5px;font-size:12px;line-height:15px;color:#3a5cb4">シャフト</div>
<div class="a" style="left:1184px;top:73px;width:5px;height:48px;border-radius:3px;background:#a5a5a5"></div>
<div class="a" style="left:1042px;top:141px;width:143px;height:26px;border:1.2px solid #5a6480;border-radius:4px;background:#fff;color:#4a5470;font-size:12px;font-weight:bold;text-align:center;line-height:23px">別タブでチャットを開く</div>
<div class="a" style="left:895.5px;top:173px;width:294px;height:9.5px;background:#efefef"></div>
<div class="a" style="left:1176.5px;top:182.5px;width:13px;height:600px;background:#f8f8f8;border-left:1px solid #e4e4e4"></div>
<div class="t" style="left:956px;top:216.5px;font-size:11.3px;line-height:13px;color:#8a8a8a">マニュアル権<span style="letter-spacing:-0.5px">...</span></div><div class="t" style="left:1040px;top:216.5px;font-size:11.85px;line-height:13px;color:#8a8a8a">2025/04/11 11:25</div>
<svg class="a" style="left:1142px;top:220px" width="24" height="24" viewBox="0 0 24 24"><circle cx="12" cy="6" r="5.3" fill="#9e6f71"/><path d="M1.3 21.5 Q1.8 13.8 12 13.8 Q22.2 13.8 22.7 21.5 Q22.7 23.2 21 23.2 H3 Q1.3 23.2 1.3 21.5 Z" fill="#9e6f71"/></svg>
<div class="a" style="left:927px;top:230px;width:204px;height:74px;background:#246b31;border-radius:4px 0 4px 4px"></div>
<svg class="a" style="left:1125px;top:230px" width="14" height="10" viewBox="0 0 14 10"><path d="M0 0 H13 L6 9 V0Z" fill="#246b31"/></svg>
<div class="a" style="left:935.5px;top:237px;width:190px;font-size:15px;line-height:19px;color:#fff">図面について確認したいことがあるので至急連絡お願いします</div>
<div class="t" style="left:956px;top:346px;font-size:11.3px;line-height:13px;color:#8a8a8a">マニュアル権<span style="letter-spacing:-0.5px">...</span></div><div class="t" style="left:1040px;top:346px;font-size:11.85px;line-height:13px;color:#8a8a8a">2025/04/11 11:25</div>
<svg class="a" style="left:1142px;top:349.5px" width="24" height="24" viewBox="0 0 24 24"><circle cx="12" cy="6" r="5.3" fill="#9e6f71"/><path d="M1.3 21.5 Q1.8 13.8 12 13.8 Q22.2 13.8 22.7 21.5 Q22.7 23.2 21 23.2 H3 Q1.3 23.2 1.3 21.5 Z" fill="#9e6f71"/></svg>
<div class="a" style="left:927px;top:358.5px;width:204px;height:117px;background:#d6e8d7;border-radius:4px 0 4px 4px"></div>
<svg class="a" style="left:1125px;top:358.5px" width="14" height="10" viewBox="0 0 14 10"><path d="M0 0 H13 L6 9 V0Z" fill="#d6e8d7"/></svg>
<svg class="a" style="left:937px;top:368px" width="42" height="40" viewBox="0 0 42 40"><rect x="9.2" y="2.1" width="29.2" height="29.6" rx="3" fill="none" stroke="#111" stroke-width="2.2"/><path d="M3.25 6.8 V35.2 Q3.25 37.25 5.3 37.25 H34" fill="none" stroke="#111" stroke-width="2.3"/><g fill="none" stroke="#111" stroke-width="1.6"><path d="M14.3 22.2 V13.3 H16.5 Q18.5 13.3 18.5 15.7 Q18.5 18.1 16.5 18.1 H14.3"/><path d="M23 13.3 V21.4 H24.5 Q27.2 21.4 27.2 17.35 Q27.2 13.3 24.5 13.3 Z"/><path d="M30.7 22.2 V13.3 H34.4 M30.7 17.5 H33.8"/></g></svg>
<div class="t" style="left:935.5px;top:418px;font-size:15px;line-height:18px;color:#3a5cb4">図面 1.pdf</div>
<div class="t" style="left:1057px;top:438px;font-size:14px;line-height:17px;color:#8c978c;letter-spacing:0.55px">358.06KB</div>
<div class="t" style="left:956px;top:517px;font-size:11.3px;line-height:13px;color:#8a8a8a">マニュアル権<span style="letter-spacing:-0.5px">...</span></div><div class="t" style="left:1040px;top:517px;font-size:11.85px;line-height:13px;color:#8a8a8a">2025/04/11 11:26</div>
<svg class="a" style="left:1142px;top:520.5px" width="24" height="24" viewBox="0 0 24 24"><circle cx="12" cy="6" r="5.3" fill="#9e6f71"/><path d="M1.3 21.5 Q1.8 13.8 12 13.8 Q22.2 13.8 22.7 21.5 Q22.7 23.2 21 23.2 H3 Q1.3 23.2 1.3 21.5 Z" fill="#9e6f71"/></svg>
<div class="a" style="left:927px;top:530px;width:204px;height:114px;background:#d6e8d7;border-radius:4px 0 4px 4px"></div>
<svg class="a" style="left:1125px;top:530px" width="14" height="10" viewBox="0 0 14 10"><path d="M0 0 H13 L6 9 V0Z" fill="#d6e8d7"/></svg>
<svg class="a" style="left:937px;top:539px" width="42" height="40" viewBox="0 0 42 40"><rect x="9.2" y="2.1" width="29.2" height="29.6" rx="3" fill="none" stroke="#111" stroke-width="2.2"/><path d="M3.25 6.8 V35.2 Q3.25 37.25 5.3 37.25 H34" fill="none" stroke="#111" stroke-width="2.3"/><g fill="none" stroke="#111" stroke-width="1.6"><path d="M14.3 22.2 V13.3 H16.5 Q18.5 13.3 18.5 15.7 Q18.5 18.1 16.5 18.1 H14.3"/><path d="M23 13.3 V21.4 H24.5 Q27.2 21.4 27.2 17.35 Q27.2 13.3 24.5 13.3 Z"/><path d="M30.7 22.2 V13.3 H34.4 M30.7 17.5 H33.8"/></g></svg>
<div class="t" style="left:935.5px;top:590px;font-size:15px;line-height:18px;color:#3a5cb4">図面 2.pdf</div>
<div class="t" style="left:956px;top:687.5px;font-size:11.3px;line-height:13px;color:#8a8a8a">マニュアル権<span style="letter-spacing:-0.5px">...</span></div><div class="t" style="left:1040px;top:687.5px;font-size:11.85px;line-height:13px;color:#8a8a8a">2025/04/11 11:26</div>
<svg class="a" style="left:1142px;top:690px" width="24" height="24" viewBox="0 0 24 24"><circle cx="12" cy="6" r="5.3" fill="#9e6f71"/><path d="M1.3 21.5 Q1.8 13.8 12 13.8 Q22.2 13.8 22.7 21.5 Q22.7 23.2 21 23.2 H3 Q1.3 23.2 1.3 21.5 Z" fill="#9e6f71"/></svg>
<div class="a" style="left:927px;top:701px;width:204px;height:100px;background:#d6e8d7;border-radius:4px 0 4px 4px"></div>
<svg class="a" style="left:1125px;top:701px" width="14" height="10" viewBox="0 0 14 10"><path d="M0 0 H13 L6 9 V0Z" fill="#d6e8d7"/></svg>
<svg class="a" style="left:937px;top:710px" width="42" height="40" viewBox="0 0 42 40"><rect x="9.2" y="2.1" width="29.2" height="29.6" rx="3" fill="none" stroke="#111" stroke-width="2.2"/><path d="M3.25 6.8 V35.2 Q3.25 37.25 5.3 37.25 H34" fill="none" stroke="#111" stroke-width="2.3"/><g fill="none" stroke="#111" stroke-width="1.6"><path d="M14.3 22.2 V13.3 H16.5 Q18.5 13.3 18.5 15.7 Q18.5 18.1 16.5 18.1 H14.3"/><path d="M23 13.3 V21.4 H24.5 Q27.2 21.4 27.2 17.35 Q27.2 13.3 24.5 13.3 Z"/><path d="M30.7 22.2 V13.3 H34.4 M30.7 17.5 H33.8"/></g></svg>
<div class="t" style="left:935.5px;top:760.5px;font-size:15px;line-height:18px;color:#3a5cb4">図面 3.pdf</div>
<div class="a" style="left:1181px;top:766px;width:6px;height:20px;border-radius:3px;background:#bdbdbd"></div>
<div class="a" style="left:1034.5px;top:570px;width:96.5px;height:72px;background:#fff;border-radius:4px;box-shadow:0 1px 4px rgba(0,0,0,.25)"></div>
<svg class="a" style="left:1098px;top:641px" width="14" height="8" viewBox="0 0 14 8"><path d="M0 0 L7 7 L14 0Z" fill="#fff"/></svg>
<div class="t" style="left:1042px;top:581.5px;font-size:10.3px;line-height:13px;color:#555">メッセージを編集</div>
<div class="t" style="left:1042px;top:616.5px;font-size:10.3px;line-height:13px;color:#e8655a">メッセージを削除</div>
<div class="a" style="left:944px;top:647.5px;width:183px;height:33.5px;background:#fff;border-radius:3px;box-shadow:0 1px 4px rgba(0,0,0,.22)"></div>
<div class="a" style="left:980px;top:648px;width:1px;height:33px;background:#e6e6e6"></div>
<div class="a" style="left:1055.5px;top:648px;width:1px;height:33px;background:#e6e6e6"></div>
<div class="a" style="left:1090px;top:648px;width:1px;height:33px;background:#e6e6e6"></div>
<div class="t" style="left:951px;top:658px;font-size:9.8px;line-height:13px;color:#666">返信</div>
<div class="t" style="left:988px;top:658px;font-size:9.8px;line-height:13px;color:#666">リアクション</div>
<div class="t" style="left:1064px;top:658px;font-size:9.8px;line-height:13px;color:#666">未読</div>
<svg class="a" style="left:1102px;top:661px" width="20" height="6" viewBox="0 0 20 6"><circle cx="3" cy="3" r="2" fill="#333"/><circle cx="10" cy="3" r="2" fill="#333"/><circle cx="17" cy="3" r="2" fill="#333"/></svg>
<svg class="a" style="left:0;top:0" width="1200" height="779" viewBox="0 0 1200 779"><path d="M904.30 506.85 H912.30 M925.00 506.85 H937.70 M950.00 506.85 H962.70 M975.00 506.85 H987.70 M1000.00 506.85 H1012.70 M1025.00 506.85 H1037.70 M1050.00 506.85 H1062.70 M1075.00 506.85 H1087.70 M1100.00 506.85 H1112.70 M1125.00 506.85 H1137.70 M1150.00 506.85 H1162.70 M1176.00 506.85 H1183.30 M906.3 505.00 V513.00 M906.3 525.70 V538.40 M906.3 550.70 V563.40 M906.3 575.70 V588.40 M906.3 600.70 V613.40 M906.3 625.70 V638.40 M906.3 650.70 V663.40 M906.3 676.70 V691.30 M904.30 689.1 H917.00 M929.00 689.1 H941.70 M954.00 689.1 H966.70 M979.00 689.1 H991.70 M1004.00 689.1 H1016.70 M1029.00 689.1 H1041.70 M1054.00 689.1 H1066.70 M1079.00 689.1 H1091.70 M1104.00 689.1 H1116.70 M1129.00 689.1 H1141.70 M1154.00 689.1 H1166.70 M1181 505.00 V514.30 M1181 526.30 V539.00 M1181 551.30 V564.00 M1181 576.30 V589.00 M1181 601.30 V614.00 M1181 626.30 V639.00 M1181 651.30 V664.00 M1181 676.30 V689.00 M1028.40 563 H1041.80 M1053.40 563 H1066.80 M1078.40 563 H1091.80 M1103.40 563 H1116.80 M1128.40 563 H1141.80 M1023.65 569.80 V583.00 M1023.65 595.10 V608.30 M1023.65 620.40 V633.60 M1021.70 647.8 H1034.50 M1046.50 647.8 H1059.30 M1071.30 647.8 H1084.10 M1096.10 647.8 H1108.90 M1139.85 577.50 V590.90 M1139.85 602.50 V615.90 M1139.85 627.50 V640.90 " fill="none" stroke="#ee2211" stroke-width="4"/><rect x="1038.85" y="608.65" width="90.2" height="27" fill="none" stroke="#ee2211" stroke-width="3.7"/><rect x="1090.5" y="648" width="40.7" height="33.4" fill="none" stroke="#ee2211" stroke-width="3.6"/></svg>
</body></html>
